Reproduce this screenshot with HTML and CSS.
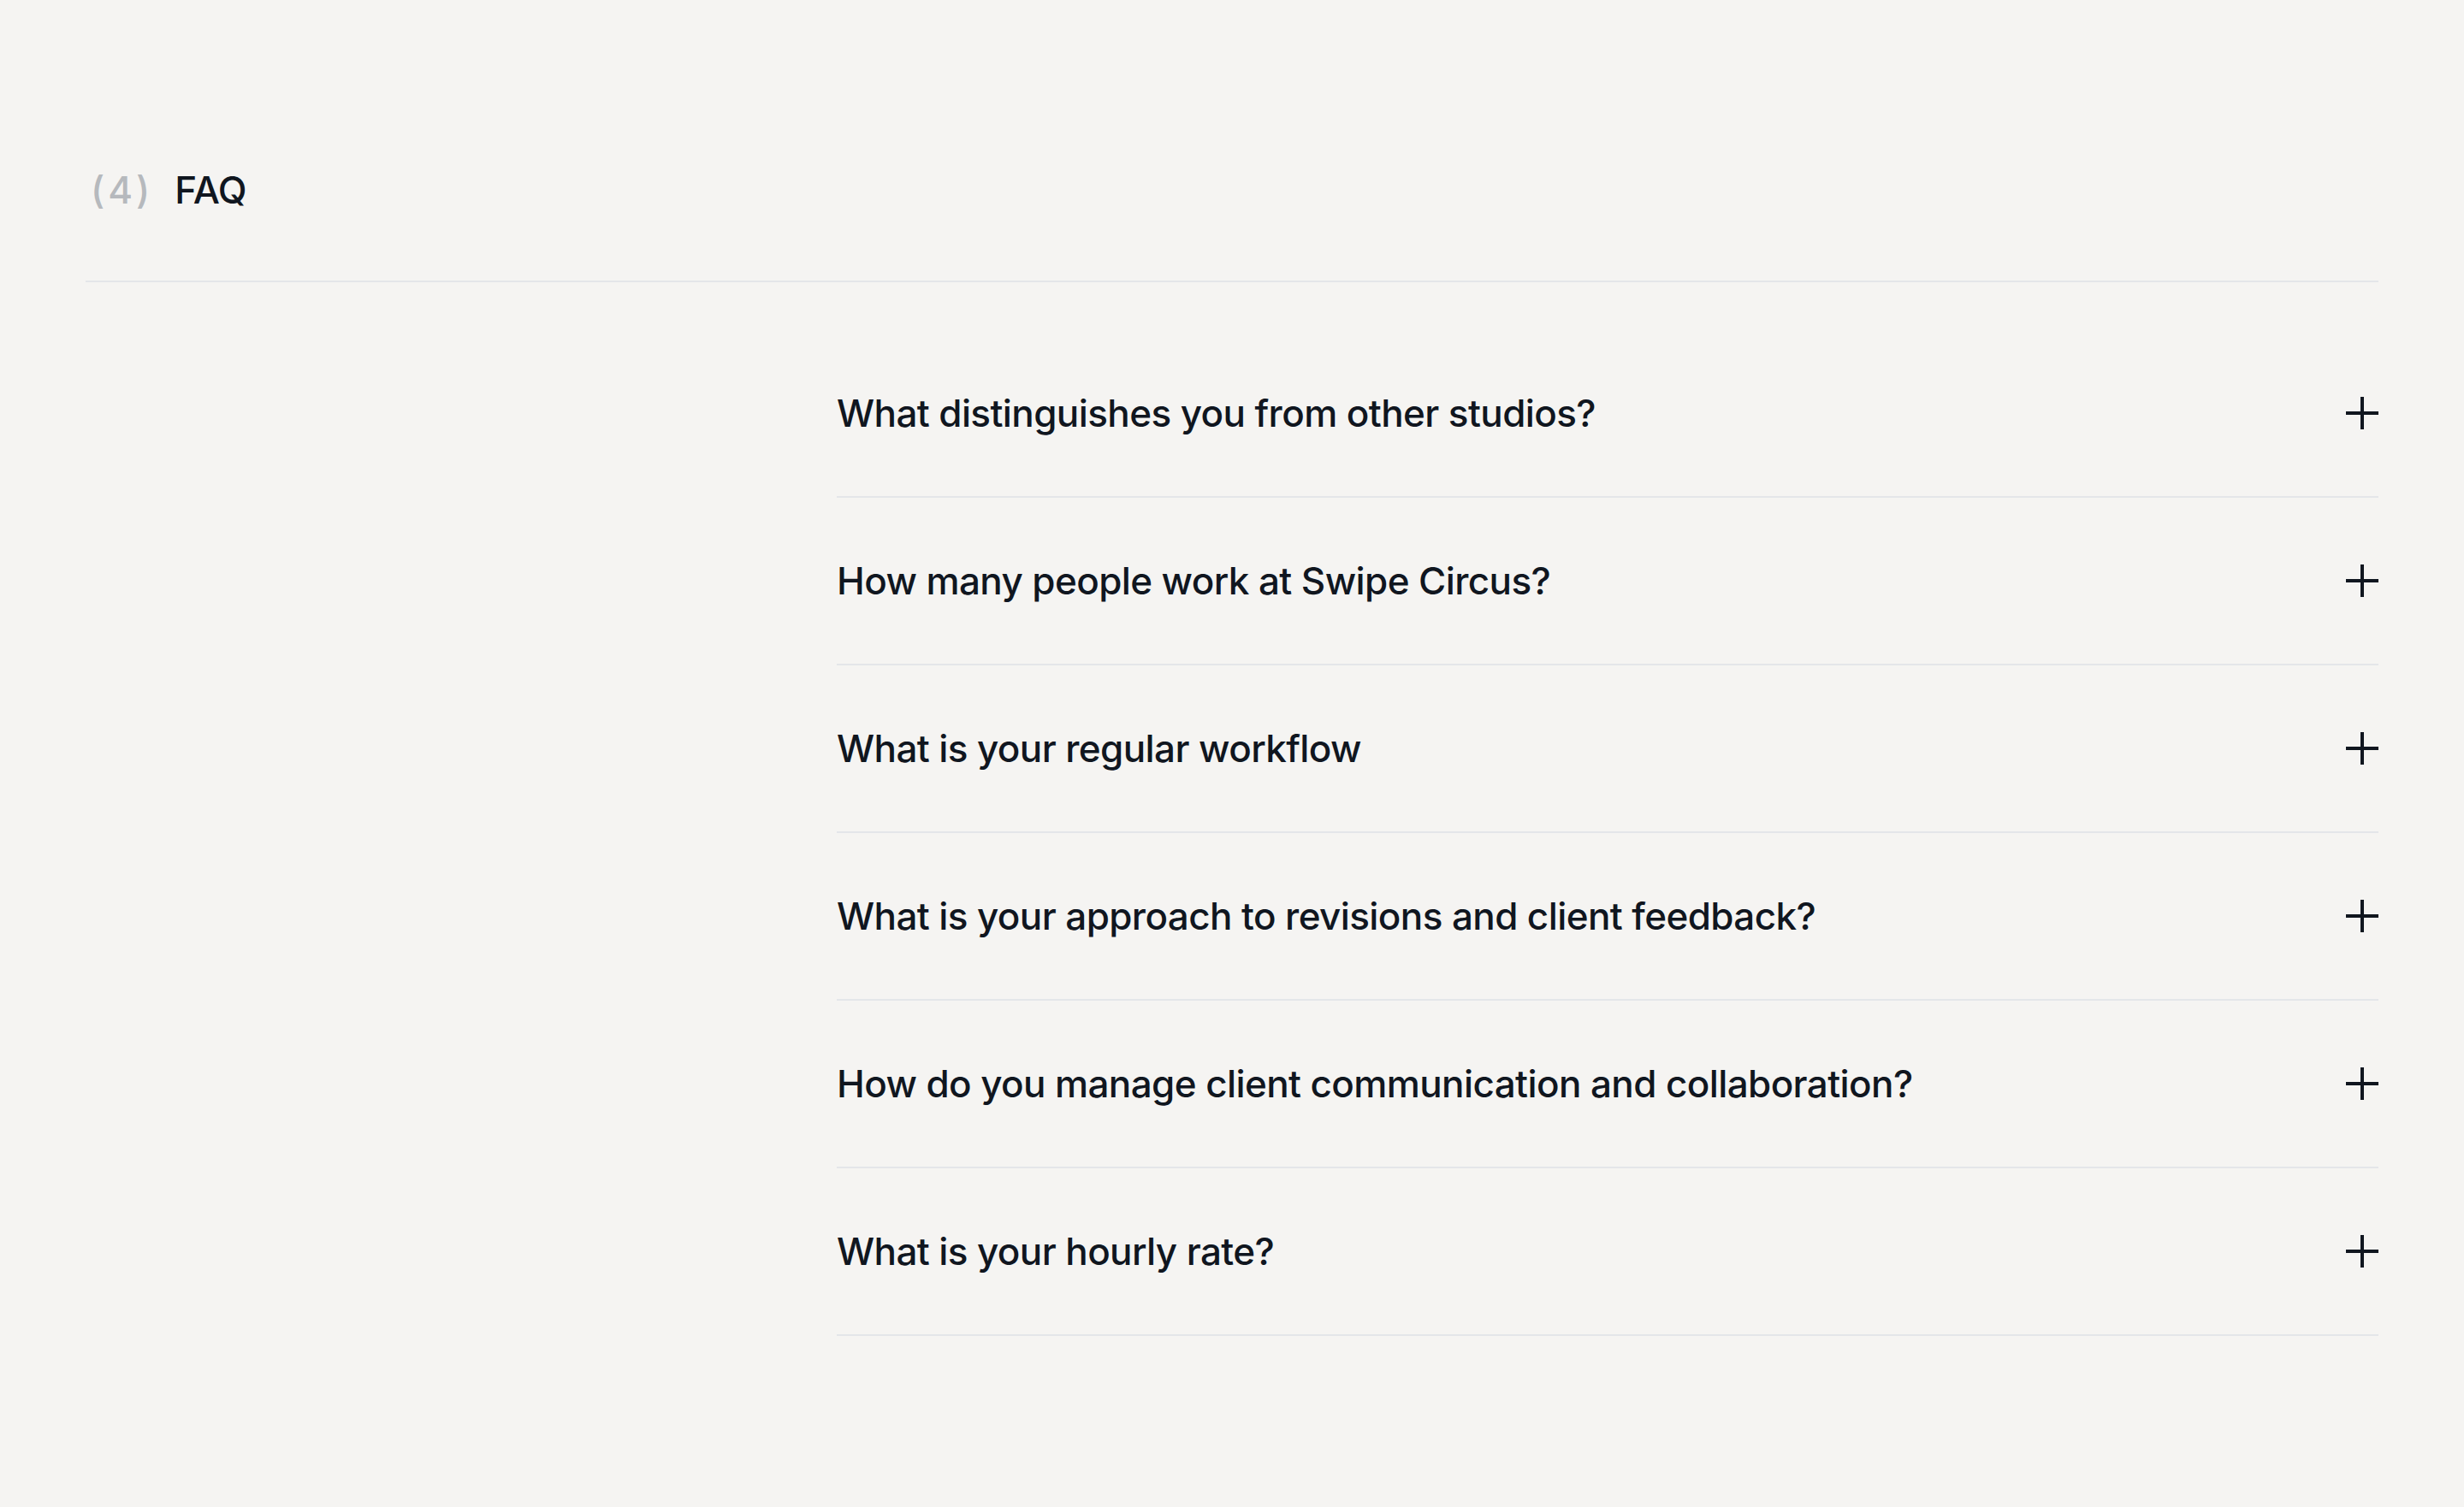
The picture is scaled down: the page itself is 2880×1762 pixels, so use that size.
FILE: index.html
```html
<!DOCTYPE html>
<html lang="en">
<head>
  <meta charset="UTF-8" />
  <meta name="viewport" content="width=device-width, initial-scale=1.0" />
  <title>FAQ</title>
  <link rel="stylesheet" href="styles.css">
</head>
<body>
  <section class="faq">
    <header class="faq-head">
      <span class="faq-num">(4)</span>
      <h2>FAQ</h2>
    </header>
    <div class="faq-body">
      <div></div>
      <div class="faq-list">
        <div class="faq-item">
          <span>What distinguishes you from other studios?</span>
          <svg class="plus" viewBox="0 0 38 38"><path d="M19 0v38M0 19h38" /></svg>
        </div>
        <div class="faq-item">
          <span>How many people work at Swipe Circus?</span>
          <svg class="plus" viewBox="0 0 38 38"><path d="M19 0v38M0 19h38" /></svg>
        </div>
        <div class="faq-item">
          <span>What is your regular workflow</span>
          <svg class="plus" viewBox="0 0 38 38"><path d="M19 0v38M0 19h38" /></svg>
        </div>
        <div class="faq-item">
          <span>What is your approach to revisions and client feedback?</span>
          <svg class="plus" viewBox="0 0 38 38"><path d="M19 0v38M0 19h38" /></svg>
        </div>
        <div class="faq-item">
          <span>How do you manage client communication and collaboration?</span>
          <svg class="plus" viewBox="0 0 38 38"><path d="M19 0v38M0 19h38" /></svg>
        </div>
        <div class="faq-item">
          <span>What is your hourly rate?</span>
          <svg class="plus" viewBox="0 0 38 38"><path d="M19 0v38M0 19h38" /></svg>
        </div>
      </div>
    </div>
  </section>
</body>
</html>
```

FILE: styles.css
```css
body {
  margin: 0;
  background-color: #f5f4f2;
  color: #10161f;
  font-family: Inter, "Noto Sans", sans-serif;
}
.faq {
  padding: 196px 100px 100px;
}
.faq-head {
  display: flex;
  align-items: baseline;
  gap: 25px;
  padding-bottom: 79px;
  border-bottom: 2px solid #e4e6e9;
  font-size: 44px;
  line-height: 53px;
  font-weight: 500;
}
.faq-num {
  color: #b6b9bd;
  letter-spacing: 4px;
  margin-left: 6px;
}
.faq-head h2 {
  margin: 0;
  font-size: inherit;
  font-weight: 500;
  letter-spacing: -0.5px;
}
.faq-body {
  display: grid;
  grid-template-columns: 878px 1fr;
  margin-top: 56px;
}
.faq-item {
  display: flex;
  align-items: center;
  justify-content: space-between;
  padding: 70px 0;
  border-bottom: 2px solid #e4e6e9;
  font-size: 44px;
  line-height: 54px;
  font-weight: 500;
  letter-spacing: -0.6px;
}
.plus {
  width: 38px;
  height: 38px;
  stroke: #10161f;
  stroke-width: 4;
  fill: none;
}
```
